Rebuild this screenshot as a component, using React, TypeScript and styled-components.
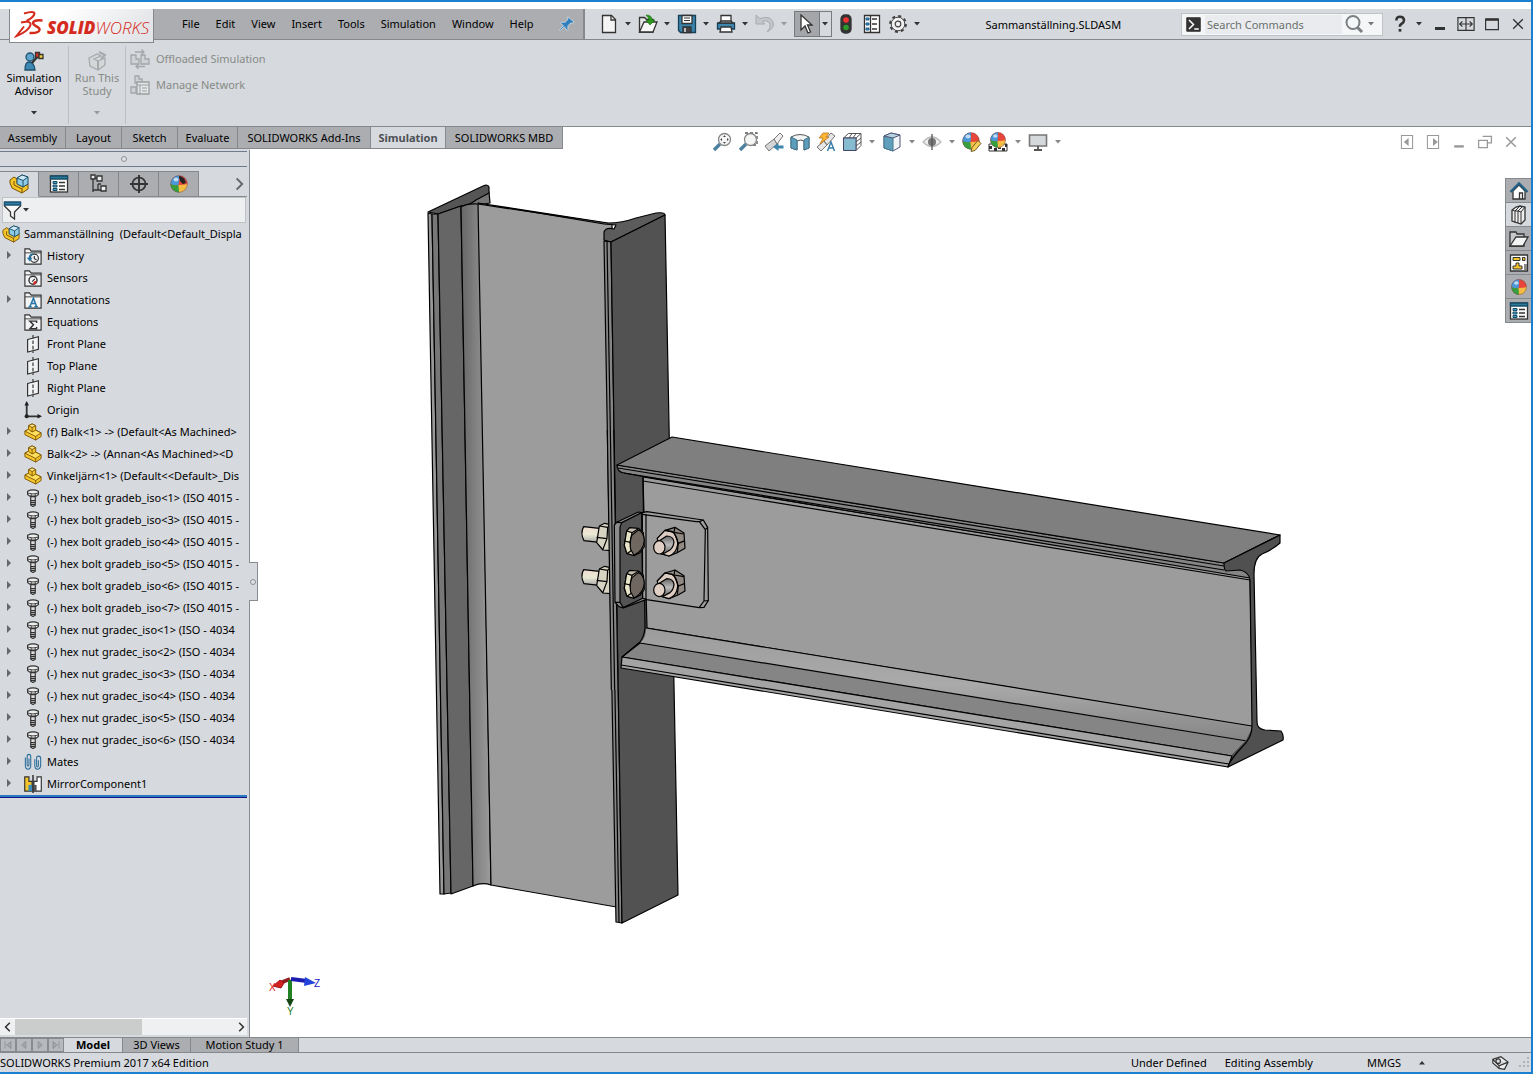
import React from "react";
import styled, { createGlobalStyle, css } from "styled-components";

const c = {
  panel: "#d6d9de",
  bar: "#abadb1",
  line: "#85898c",
  blue: "#1b7fd0",
  text: "#000000",
  muted: "#868b86",
};

const Global = createGlobalStyle`
  *, *::before, *::after { box-sizing: border-box; }
  html, body { margin: 0; padding: 0; }
  body { font-family: "Noto Sans", "Open Sans", "Liberation Sans", sans-serif; font-size: 11px; line-height: 14px; color: ${c.text}; background: ${c.panel}; }
  button, input { font: inherit; color: inherit; }
  button { margin: 0; padding: 0; border: 0; background: none; }
  svg { display: block; flex: none; }
`;

const Shell = styled.div`
  display: flex; flex-direction: column; height: 100vh; min-height: 600px;
  border-right: 2px solid ${c.blue}; background: ${c.panel};
`;
const TopStrip = styled.div`
  height: 9px; flex: none; border-top: 2px solid ${c.blue}; background: #fff;
`;

/* Title bar */
const TitleBar = styled.header`
  position: relative; display: flex; flex: none; height: 31px;
  border-bottom: 1px solid ${c.line}; background: ${c.panel};
`;
const Logo = styled.div`
  position: absolute; left: 9px; top: 0; z-index: 3; width: 145px; height: 34px; padding: 0 4px;
  display: flex; align-items: center; gap: 3px; color: #d52b1e;
  background: linear-gradient(135deg, #fff 30%, #e2e4e7 90%);
  border: 1px solid ${c.line}; border-top: 0;
`;
const LogoText = styled.span`
  font: italic 300 17px/20px "Open Sans", sans-serif; margin-top: 4px;
  b { font-weight: 800; }
`;
const MenuBar = styled.nav`
  display: flex; align-items: center; gap: 16px; padding: 0 9px 0 182px;
  box-shadow: inset -2px 0 ${c.line};
  background: linear-gradient(to right, ${c.panel} 9px, ${c.bar} 9px);
`;
const MenuButton = styled.button` line-height: 30px; `;
const PinButton = styled.button` margin-left: 8px; `;
const QuickTools = styled.div` display: flex; align-items: center; padding-left: 14px; `;
const IconButton = styled.button<{ $w?: number }>`
  display: flex; align-items: center; justify-content: center; width: ${(p) => p.$w ?? 20}px; height: 26px;
`;
const SelectTool = styled.div`
  display: flex; height: 26px; border: 1px solid #777b7e; margin-right: 4px;
  button { height: 24px; }
  button:first-child { background: #a4a6a9; border-right: 1px solid #777b7e; }
`;
const DocTitle = styled.h1`
  flex: 1; margin: 0; text-align: center; font-size: 11px; font-weight: 400; line-height: 31px; white-space: nowrap;
`;
const Search = styled.label`
  display: flex; align-items: center; align-self: center; width: 202px; height: 23px; padding: 0 4px;
  border: 1px solid #c0c3c6; background: #f5f6f7;
  input { flex: 1; min-width: 0; height: 19px; margin: 0 2px 0 4px; padding: 0 2px; border: 0; background: #e9ebee; outline: 0; }
  input::placeholder { color: #6a716d; opacity: 1; }
`;
const WindowTools = styled.div` display: flex; align-items: center; padding-left: 7px; `;

/* Ribbon */
const Ribbon = styled.section` display: flex; flex: none; height: 86px; background: ${c.panel}; `;
const RibbonTool = styled.button<{ $w: number }>`
  display: flex; flex-direction: column; align-items: center; width: ${(p) => p.$w}px; margin: 6px 0 2px;
  padding-top: 5px; border-right: 1px solid #bcbfc3; line-height: 13px;
  svg:last-child { margin-top: 14px; }
  &:disabled { color: ${c.muted}; }
`;
const RibbonList = styled.div` display: flex; flex-direction: column; gap: 6px; padding: 9px 4px; `;
const RibbonLine = styled.button`
  display: flex; align-items: center; gap: 6px; height: 20px; color: ${c.muted};
`;

/* Workspace */
const Workspace = styled.main`
  flex: 1; min-height: 0; display: grid; grid-template: 23px minmax(0, 1fr) / 250px minmax(0, 1fr);
  border-top: 1px solid ${c.line};
`;
const CommandTabs = styled.div`
  grid-area: 1 / 1 / 2 / 3; z-index: 1; justify-self: start; display: flex; height: 22px;
  border-bottom: 1px solid ${c.line}; background: ${c.bar};
`;
const CommandTab = styled.button<{ $active?: boolean; $w: number }>`
  width: ${(p) => p.$w}px; border-right: 1px solid ${c.line}; white-space: nowrap;
  ${(p) => p.$active && css` background: ${c.panel}; font-weight: 700; color: #4c5054; `}
`;
const Panel = styled.aside`
  position: relative; grid-area: 2 / 1; display: flex; flex-direction: column; min-height: 0;
  border-right: 1px solid #888b8f; background: ${c.panel};
`;
const Grip = styled.div`
  height: 16px; margin: 1px 2px 0 0; display: flex; align-items: center; justify-content: center; flex: none;
  border: solid #6f7a8c; border-width: 1px 0;
`;
const Knob = styled.span` width: 6px; height: 6px; border: 1px solid #8d9093; border-radius: 50%; background: #dfe1e4; `;
const PanelTabs = styled.div`
  display: flex; flex: none; height: 26px; margin: 4px 2px 0 0; border-bottom: 1px solid ${c.line};
`;
const PanelTab = styled.button<{ $active?: boolean }>`
  display: flex; align-items: center; justify-content: center; width: ${(p) => (p.$active ? 39 : 40)}px; height: 26px;
  border: solid ${c.line}; border-width: 1px 1px 1px 0; background: ${(p) => (p.$active ? c.panel : c.bar)};
  ${(p) => p.$active && css` border-bottom-color: ${c.panel}; `}
`;
const MoreButton = styled.button` margin-left: auto; `;
const Filter = styled.label`
  display: flex; align-items: center; flex: none; height: 26px; margin: 0 3px 0 2px;
  border: 1px solid #bfc1c4; background: #eeeff1;
  input { flex: 1; min-width: 0; border: 0; background: none; outline: 0; }
`;
const Tree = styled.ul`
  margin: 0 2px 0 0; padding: 0; list-style: none; overflow: hidden; flex: none;
  border-bottom: 2px solid #2b7abf; box-shadow: 0 1px #15158c;
`;
const TreeRow = styled.li<{ $root?: boolean }>`
  display: flex; align-items: center; height: 22px; white-space: pre;
  padding-left: ${(p) => (p.$root ? 2 : 6)}px;
`;
const Expander = styled.button` width: 18px; height: 22px; padding-bottom: 3px; `;
const NodeIcon = styled.span<{ $root?: boolean }>`
  width: 18px; margin-right: ${(p) => (p.$root ? 4 : 5)}px; flex: none;
`;
const PanelHandle = styled.button`
  position: absolute; left: 249px; top: 412px; z-index: 2; width: 9px; height: 39px;
  display: flex; align-items: center; justify-content: center;
  border: 1px solid #888b8f; border-left: 0; background: ${c.panel};
`;
const HScroll = styled.div`
  display: flex; align-items: center; flex: none; height: 17px; margin: auto 2px 2px 0; background: #eff0f2; border-top: 1px solid #fff;
`;
const HThumb = styled.div` width: 127px; height: 16px; margin-right: auto; background: #cbcdcd; `;

/* Graphics area */
const Viewport = styled.section`
  grid-area: 1 / 2 / 3 / 3; display: flex; flex-direction: column; min-height: 0; background: #fff;
`;
const HudRow = styled.div`
  display: grid; grid-template-columns: minmax(0, 1fr) auto minmax(0, 1fr); align-items: center; height: 30px; flex: none;
  padding-right: 7px;
`;
const Hud = styled.div` grid-column: 2; display: flex; `;
const DocControls = styled.div` display: flex; justify-content: flex-end; `;
const Stage = styled.div` display: flex; flex: 1; min-height: 0; `;
const ModelArea = styled.div` flex: 1; min-width: 0; svg { width: 100%; height: 100%; } `;
const TaskPane = styled.div`
  align-self: flex-start; width: 26px; margin-top: 21px; border: solid ${c.line}; border-width: 0 0 1px 1px;
`;
const TaskButton = styled.button<{ $active?: boolean }>`
  display: flex; align-items: center; justify-content: center; width: 100%; height: 24px;
  border-top: 1px solid ${c.line}; background: ${(p) => (p.$active ? c.panel : c.bar)};
`;

/* Bottom */
const BottomTabs = styled.nav`
  display: flex; flex: none; height: 16px; border: solid ${c.line}; border-width: 1px 0;
`;
const NavButton = styled.button`
  width: 16px; height: 14px; border: 1px solid #888b8f; background: #b6b9bd; display: flex; align-items: center; justify-content: center;
`;
const BottomTab = styled.button<{ $active?: boolean; $w: number }>`
  width: ${(p) => p.$w}px; line-height: 12px; border-right: 1px solid ${c.line};
  background: ${(p) => (p.$active ? c.panel : c.bar)}; font-weight: ${(p) => (p.$active ? 700 : 400)};
`;
const StatusBar = styled.footer`
  display: flex; align-items: center; flex: none; height: 21px;
  border-bottom: 2px solid ${c.blue};
`;
const StatusItem = styled.span<{ $gap?: number }>` margin-right: ${(p) => p.$gap ?? 0}px; &:first-child { margin-right: auto; } `;

/* ---------- icons ---------- */
type IconProps = { children: React.ReactNode; s?: number };
const Ico = ({ children, s = 20 }: IconProps) => (
  <svg width={s} height={s} viewBox="0 0 20 20" fill="none" stroke="#333" strokeWidth="1.3" aria-hidden="true">{children}</svg>
);
const Caret = ({ color = "#333" }: { color?: string }) => (
  <svg width="6" height="4" viewBox="0 0 6 4" aria-hidden="true"><path d="M0 0h6L3 3.5z" fill={color} /></svg>
);

const Sphere = () => (
  <g stroke="none">
    <circle cx="10" cy="10" r="8.5" fill="#e8463a" />
    <path d="M10 1.5A8.500 8.500 0 0 0 1.500 10q4 2 8 1 1-5 .5-9.500z" fill="#4a97da" />
    <path d="M1.500 10A8.500 8.500 0 0 0 10 18.500q.5-4-.5-7.500-4 1-8-1z" fill="#36a03c" />
    <path d="M9.500 11q5 0 9-1A8.500 8.500 0 0 1 10 18.500z" fill="#f3bd45" />
    <ellipse cx="7" cy="5.500" rx="2.500" ry="2" fill="#fff" opacity=".65" />
    <circle cx="10" cy="10" r="8.300" fill="none" stroke="#555" strokeWidth=".6" opacity=".7" />
  </g>
);
/* shaded blocks of the part and assembly symbols */
const Part = () => (
  <g stroke="#7b5200" strokeWidth="1" strokeLinejoin="round">
    <path d="M1 9l4-2V3l4-2 4 2v5l6 3v4l-6 4L1 13z" fill="#f5c62c" />
    <path d="M5 3l4 2 4-2-4-2z" fill="#ffe98f" />
    <path d="M5 7l-4 2 12 6 6-4-6-3-4 2z" fill="#ffdf5e" />
    <path d="M9 5v5M13 15v4" fill="none" />
  </g>
);
const Asm = () => (
  <g strokeLinejoin="round" strokeWidth="1">
    <path d="M1 9V6l4-3 3 2v4l6 4 5-3v5l-6 4L3 14z" fill="#f5c62c" stroke="#7b5200" />
    <path d="M13 14v5M5 7v4l8 4" stroke="#7b5200" />
    <path d="M8 4l5-3 6 2v7l-5 3-6-3z" fill="#8dcbe6" stroke="#1d4f69" />
    <path d="M8 4l6 2.500 5-3.500-6-2z" fill="#cfeaf5" stroke="#1d4f69" />
    <path d="M14 6.500V13" stroke="#1d4f69" />
  </g>
);
const PropList = () => (
  <g>
    <rect x="1.500" y="2" width="17" height="16" fill="#fff" />
    <path d="M1.500 2h17v3h-17z" fill="#2b7a9d" stroke="#174d67" />
    <g fill="#4aa3cc" stroke="#174d67" strokeWidth="1"><path d="M4 7.500h4v2H4zM4 11h4v2H4zM4 14.500h4v2H4z" /></g>
    <path d="M10 8.500h6M10 12h6M10 15.500h6" />
  </g>
);
const Folder = ({ children }: { children: React.ReactNode }) => (
  <Ico s={18}><path d="M1 19V2h5l2 2.500h11V19z" fill="#f3f4f5" /><path d="M1 6.500h18" strokeWidth="1" />{children}</Ico>
);
const Plane = () => (
  <Ico s={18}><path d="M4 5l12-3v14L4 19z" fill="#f2f3f4" /><path d="M10 0v20" strokeDasharray="4 2" /></Ico>
);
const Bolt = () => (
  <Ico s={18}>
    <path d="M4 2.500Q10-.5 16 2.500V6l-2.500 2h-7L4 6z" fill="#eee" />
    <path d="M4 4.500q6 2 12 0M8 5.500V8M12.500 5.500V8" strokeWidth="1" />
    <path d="M7.500 8.500h5V18L10 19.500 7.500 18z" fill="#ddd" /><path d="M7.500 13h5M7.500 15h5M7.500 17h5" />
  </Ico>
);
const I: Record<string, React.ReactNode> = {
  history: <Folder><circle cx="11.500" cy="12.500" r="4.500" /><path d="M11.500 10v3l2.500 1.500" /><path d="M3 12l3.500 4 3-4z" fill="#2776a8" stroke="none" /><path d="M6 12.500q0-4 4-4.500" stroke="#2776a8" strokeWidth="2" /></Folder>,
  sensors: <Folder><circle cx="10" cy="12.500" r="4.500" strokeWidth="1.600" /><path d="M9 14l3-3" /><path d="M11 14l3-1-1 4h-3z" fill="#d22" stroke="none" /></Folder>,
  annotations: <Folder><path d="M5 17.500h3.500M11.500 17.500h4M6.500 17.500l4-9.500 3.500 9.500M8.500 14h4" stroke="#2776a8" strokeWidth="1.700" /></Folder>,
  equations: <Folder><path d="M14 11V9H6.500l4 4-4 4.500H14v-2" strokeWidth="1.600" /></Folder>,
  plane: <Plane />,
  origin: <Ico s={18}><path d="M3 2v15h15" strokeWidth="2" /><path d="M3 0L.5 5h5zM20 17l-5-2.500v5z" fill="#222" stroke="none" /><circle cx="3" cy="17" r="2.300" fill="#222" stroke="none" /></Ico>,
  part: <Ico s={18}><Part /></Ico>,
  asm: <Ico s={18}><Asm /></Ico>,
  bolt: <Bolt />,
  mates: <Ico s={18}><g stroke="#2c6f9b" strokeWidth="1.200"><path d="M1.500 5v9q0 4 3 4t3-4V4q0-2.500-2-2.500T3.500 4v9q0 1.500 1 1.500t1-1.500V6M12 7v7q0 4 3 4t3.500-4V6q0-2.500-2.300-2.500T14 6v8q0 1.500 1 1.500t1-1.500V8" /></g></Ico>,
  mirror: <Ico s={18}><path d="M.8 2h4.700v5H9v11H.8z" fill="#f5c62c" /><path d="M19.200 2h-4.700v5H11v11h8.200z" fill="#fff" /><path d="M5 11h4v7H5z" fill="#3b8ab8" stroke="none" /><path d="M11 11h3v7h-3z" fill="#555" stroke="none" /><path d="M10 0v20" strokeWidth="1.700" /></Ico>,
};

const Mag = () => (<><path d="M2 18l6-6" stroke="#4d7f9f" strokeWidth="3.400" /><circle cx="12.500" cy="7.500" r="6" fill="#f5f5f5" stroke="#888" /></>);
const hud: Record<string, React.ReactNode> = {
  "Zoom to Fit": <Ico><Mag /><path d="M12.500 3.200L14 5h-3zM12.500 11.800L14 10h-3zM8.200 7.500L10 6v3zM16.800 7.500L15 6v3z" fill="#444" stroke="none" /></Ico>,
  "Zoom to Area": <Ico><path d="M7 1h12v12h-5" stroke="#555" strokeDasharray="3 2" /><Mag /></Ico>,
  "Previous View": <Ico><path d="M1 14l9-7 3 5-8 7z" fill="#d5d5d5" stroke="#777" strokeWidth="1" /><path d="M10 7l6-6 3 3-6 8z" fill="#eee" stroke="#777" strokeWidth="1" /><path d="M19.500 16.500h-5v2.500L9 15l5.500-4v2.500h5z" fill="#3d86ac" stroke="none" /></Ico>,
  "Section View": <Ico><path d="M1 5q9-5 18 0v11l-5 2V9q-3-2-7 0v9l-6-2z" fill="#f1f3f4" stroke="#555" strokeWidth="1" /><path d="M1 5l6 3v10l-6-2zM14 8l5-3v11l-5 2z" fill="#5b9dbb" stroke="#41748d" strokeWidth="1" /></Ico>,
  "Dynamic Annotation Views": <Ico><path d="M1 15l7-6 3 4-6 6zM8 9l7-8 4 3-8 9z" fill="#e6e6e6" stroke="#777" strokeWidth="1" /><path d="M7 1h6l-3 4h3l-9 7 3-6H3z" fill="#ffb733" stroke="#b77320" strokeWidth=".8" /><path d="M11.500 19l3.500-9 3.500 9M13 16h4" stroke="#3d7fa8" strokeWidth="1.500" /></Ico>,
  "View Orientation": <Ico><path d="M1.500 6l5-4.500H19v12L14 18.500V6z" fill="#fff" stroke="#555" strokeWidth="1" /><path d="M14 6l5-4.500M10 1.500L7 6M14 1.500L11 6M14 10l5-4M14 14l5-4" stroke="#555" strokeWidth="1" /><path d="M1.500 6H14v12.500H1.500z" fill="#86bbd0" stroke="#446" strokeWidth="1" /></Ico>,
  "Display Style": <Ico><path d="M2 4l7-3 9 2v12l-7 4-9-3z" fill="#eef4f7" stroke="#557" strokeWidth="1" /><path d="M2 4l9 2v13l-9-3z" fill="#5f9fbc" stroke="#47768d" strokeWidth="1" /><path d="M2 4l7-3 9 2-7 3z" fill="#b3d3e0" stroke="#557" strokeWidth="1" /></Ico>,
  "Hide/Show Items": <Ico><path d="M1 10q9-10 18 0-9 9-18 0z" fill="#eee" stroke="#bbb" /><circle cx="10" cy="10" r="4" fill="#777" stroke="none" /><path d="M10 2v16" stroke="#555" /></Ico>,
  "Edit Appearance": <Ico><g transform="translate(-1 -1)"><Sphere /></g><path d="M9 19.500l1-4 6-7 3 3-6 7z" fill="#f5ce58" stroke="#665020" strokeWidth=".9" /></Ico>,
  "Apply Scene": <Ico><path d="M1 12h18v7H1z" fill="#fff" strokeWidth="1" /><path d="M1 14h3v3H1zM6 16h3v3H6zM10 14h3v3h-3zM14 16h3v3h-3zM17 12h2v3h-2z" fill="#333" stroke="none" /><g transform="translate(1 -1) scale(.9)"><Sphere /></g></Ico>,
  "View Settings": <Ico><path d="M1.500 3h17v11h-17z" fill="#d6d9dc" stroke="#777" strokeWidth="1.600" /><path d="M10 14v4M6 18h8" stroke="#555" strokeWidth="1.800" /></Ico>,
};
const hudCarets = ["View Orientation", "Display Style", "Hide/Show Items", "Apply Scene", "View Settings"];

/* ---------- 3D model ---------- */
const NutBack = ({ y }: { y: number }) => (
  <g transform={`translate(0 ${y})`}>
    <path d="M41 290L88 295V337L42 332Q30 310 41 290z" fill="url(#steel)" />
    <path d="M88 288L104 280L122 284V362L99 360L80 338z" fill="#d6d3c2" />
    <path d="M88 288L113 292L111 326L98 360M113 292L120 284M80 322L111 326" fill="none" />
  </g>
);
const BoltHead = ({ y }: { y: number }) => (
  <g transform={`translate(0 ${y})`}>
    <path d="M170 303L179 293L205 295L220 308L223 350L210 368L192 377L171 371L163 346z" fill="#c6bdb1" />
    <path d="M170 303L186 308L180 337L186 360L171 371L163 346z" fill="#e7e4c8" />
    <path d="M205 300Q220 304 223 330Q222 360 192 376L182 358Q178 335 186 315z" fill="#706860" />
    <path d="M163 333L181 337M186 308L205 296" fill="none" />
  </g>
);
const NutFront = ({ y }: { y: number }) => (
  <g transform={`translate(0 ${y})`}>
    <path d="M262 325L285 301L315 292L342 309L345 355L324 367L297 378L270 370z" fill="#918983" />
    <path d="M262 325L285 301L305 304Q324 318 323 342Q320 370 297 378L270 370z" fill="#dccbc0" />
    <path d="M268 332L290 318Q310 318 312 336Q310 352 300 360L280 371z" fill="url(#steel2)" />
    <ellipse cx="268" cy="352" rx="17" ry="20" fill="#dfcfc4" />
    <path d="M285 301L312 307L342 312M312 307L325 340L345 332M325 340L322 366M315 292L312 307" fill="none" />
  </g>
);
const Model = () => (
  <svg viewBox="250 157 1255 880" preserveAspectRatio="xMinYMin meet" role="img" aria-label="Bolted beam assembly"
    stroke="#000" strokeWidth="1.200" strokeLinejoin="round">
    <defs>
      <linearGradient id="fillet"><stop offset="0" stopColor="#676767" /><stop offset="1" stopColor="#9c9c9c" /></linearGradient>
      <linearGradient id="low" x2="0" y2="1"><stop offset="0" stopColor="#9c9c9c" /><stop offset=".5" stopColor="#aaa" /><stop offset="1" stopColor="#858585" /></linearGradient>
      <linearGradient id="steel" x2="0" y2="1"><stop offset="0" stopColor="#f1ddd0" /><stop offset=".5" stopColor="#e9e9d4" /><stop offset="1" stopColor="#aaa" /></linearGradient>
      <linearGradient id="steel2" x2="0" y2="1"><stop offset="0" stopColor="#666" /><stop offset=".5" stopColor="#bbb" /><stop offset="1" stopColor="#666" /></linearGradient>
    </defs>
    {/* column */}
    <path d="M476 193L489 192L490 203L478 205L466 206z" fill="#777" />
    <path d="M428 212L483 186Q488 184 489 187V193L476 200Q470 205 461 206L438 214z" fill="#555" />
    <path d="M428 213L432 214L444 894H440z" fill="#999" />
    <path d="M432 214H438L451 893L444 894z" fill="#777" />
    <path d="M438 214L461 206L473 886L451 894z" fill="#666" />
    <path d="M461 207Q467 203 479 204L491 885Q482 882 473 886z" fill="url(#fillet)" />
    <path d="M478 204L612 224L622 908L491 885z" fill="#9c9c9c" />
    <path d="M478 203L608 223Q622 223 636 218L656 213Q665 212 665 215L611 242L604 240V232Q606 227 614 229L616 225L604 224z" fill="#5c5c5c" />
    <path d="M604 241L611 242L622 923L616 922z" fill="#858585" /><path d="M607 241L619 922" />
    <path d="M611 242L665 215L678 895L622 923z" fill="#525252" />
    {/* beam */}
    <path d="M643 477L1250 577L1253 727L647 628z" fill="#9c9c9c" />
    <path d="M617 465L1224 563L1250 570V578L640 476L624 473Q617 472 617 465z" fill="#858585" />
    <path d="M618 468L1224 566M624 473L1224 570M643 481L1250 580" fill="none" />
    <path d="M617 465L672 437L1280 535L1224 563z" fill="#7f7f7f" />
    <path d="M646 628L1252 726Q1252 736 1247 741L640 643Q646 638 646 628z" fill="url(#low)" stroke="none" />
    <path d="M646 628L1252 726" fill="none" />
    <path d="M640 643L1247 741L1232 756L622 657z" fill="#858585" />
    <path d="M1230 757L1246 740L1253 726V745L1232 764z" fill="#505050" stroke="none" />
    <path d="M622 657L1232 756L1228 767L621 668z" fill="#a4a4a4" /><path d="M621 665L1229 764" />
    <path d="M643 478L645 628Q644 637 640 642L622 657" fill="none" />
    <path d="M1224 563L1280 535V543Q1272 550 1262 554Q1254 558 1254 574L1257 722Q1257 729 1265 730L1281 731Q1284 735 1283 740L1228 767Q1230 760 1242 747Q1252 738 1252 726L1250 580Q1249 572 1240 570L1226 571Q1224 570 1224 563z" fill="#505050" />
    {/* bracket and fasteners */}
    <g transform="translate(570 430) scale(.3333)" strokeWidth="3.600">
      <NutBack y={0} /><NutBack y={129} />
      <path d="M112 0H131L145 780H124z" fill="#858585" stroke="none" /><path d="M112 0L124 780M121 0L134 780M131 0L144 780" />
      <path d="M133 285L140 277L205 246L230 250V508L160 534L147 530L135 517z" fill="#8c8c8c" />
      <path d="M155 278L215 248L218 505L160 533L150 517V292z" fill="#545454" />
      <path d="M140 277L155 278M135 517L150 517" fill="none" />
      <path d="M217 248L231 245L379 267L400 270L413 292L415 512L402 532L388 533L230 509L218 504z" fill="#9d9d9d" />
      <path d="M217 253L378 275H388L406 299L402 513L388 532M388 275L400 270M406 299L413 292M402 513L415 512M228 252V508" fill="none" />
      <BoltHead y={0} /><BoltHead y={128} /><NutFront y={0} /><NutFront y={128} />
    </g>
    {/* orientation triad */}
    <g strokeWidth="3" fill="none">
      <path d="M290 979L280 983" stroke="#8f1f1f" strokeWidth="4" /><path d="M273 986L280 980L284 983L281 988z" fill="#d42020" stroke="#a01515" strokeWidth="1" />
      <path d="M290 980V999" stroke="#218021" strokeWidth="4" /><path d="M286 999H294L290 1007z" fill="#144714" stroke="none" />
      <path d="M291 979L307 981" stroke="#1c1cb0" strokeWidth="4" /><path d="M305 977L316 983L304 986z" fill="#2443d8" stroke="none" />
    </g>
    <g stroke="none" fontSize="10" fontFamily="Liberation Sans, sans-serif">
      <text x="269" y="991" fill="#e02020">X</text><text x="287" y="1015" fill="#218021">Y</text><text x="314" y="987" fill="#2020d0">Z</text>
    </g>
  </svg>
);

/* ---------- data ---------- */
const nodes: [string, string, boolean][] = [
  ["history", "History", true], ["sensors", "Sensors", false], ["annotations", "Annotations", true], ["equations", "Equations", false],
  ["plane", "Front Plane", false], ["plane", "Top Plane", false], ["plane", "Right Plane", false], ["origin", "Origin", false],
  ["part", "(f) Balk<1> -> (Default<As Machined>", true], ["part", "Balk<2> -> (Annan<As Machined><D", true],
  ["part", "Vinkeljärn<1> (Default<<Default>_Dis", true],
  ...[1, 3, 4, 5, 6, 7].map((n): [string, string, boolean] => ["bolt", `(-) hex bolt gradeb_iso<${n}> (ISO 4015 -`, true]),
  ...[1, 2, 3, 4, 5, 6].map((n): [string, string, boolean] => ["bolt", `(-) hex nut gradec_iso<${n}> (ISO - 4034`, true]),
  ["mates", "Mates", true], ["mirror", "MirrorComponent1", true],
];
const tabs: [string, number][] = [["Assembly", 66], ["Layout", 56], ["Sketch", 56], ["Evaluate", 60], ["SOLIDWORKS Add-Ins", 133], ["Simulation", 75], ["SOLIDWORKS MBD", 117]];

const quick: [string, React.ReactNode, string?][] = [
  ["New", <Ico><path d="M3.500 1.500h9l4 4v13h-13z" fill="#f4f4f4" /><path d="M12 1.500V6h4.500" /></Ico>],
  ["Open", <Ico><path d="M1.500 18V3.500h5l2 2H15V18z" fill="#e5e6e7" /><path d="M1.500 18L6 8h13l-4 10z" fill="#f7f7f7" /><path d="M8 1q6 0 6 5h3l-5 5-4-5h3q0-2-3-5z" fill="#2b9a1b" stroke="#1a6b10" strokeWidth=".6" /></Ico>],
  ["Save", <Ico><path d="M1.500 1.500h17v17h-15l-2-2z" fill="#3a83ab" stroke="#173f58" /><path d="M5 1.500h10v8H5z" fill="#fff" /><path d="M7 4h6M7 6.500h6" strokeWidth="1" /><path d="M6 13h8v5.500H6z" fill="#444" /><path d="M8 14v4" stroke="#fff" /></Ico>],
  ["Print", <Ico><path d="M5 1.500h10V9H5z" fill="#fff" /><path d="M1.500 9h17v6h-17z" fill="#3f87ae" stroke="#173f58" /><path d="M3 9h14l-2-2H5z" fill="#ccc" /><path d="M5 13h10l1 5H4z" fill="#fff" /></Ico>],
  ["Undo", <Ico><path d="M1 1v9h9L7 7.500q6-2 8 2.500 1 4-3 8 8-4 6-10-3-7-13-3.500z" fill="#c4c7ca" stroke="#a9acaf" strokeWidth="1" /></Ico>, "#999"],
];
const Gear = () => (
  <Ico>
    <circle cx="10" cy="10" r="7.800" stroke="#444" strokeWidth="2.200" strokeDasharray="3.060 3.060" />
    <circle cx="10" cy="10" r="6.800" fill="#f1f1f1" stroke="#444" strokeWidth="1" />
    <circle cx="10" cy="10" r="2.800" stroke="#444" strokeWidth="1.200" />
  </Ico>
);

export default function App() {
  return (
    <Shell>
      <Global />
      <TopStrip />
      <TitleBar>
        <Logo>
          <svg width="30" height="30" viewBox="0 0 30 30" fill="none" stroke="#d52b1e" strokeWidth="2" aria-hidden="true">
            <path d="M10 2.500Q20-.5 20.500 2.500Q20 6 12.500 10" />
            <path d="M7 11.500Q17 9 16.500 14Q15 20 2.500 25L10 15.500" />
            <path d="M28.500 9.500Q19.500 8.500 19 12C19 15 26.500 16 25.500 19Q24.500 22.500 15.500 22" strokeWidth="2.500" />
          </svg>
          <LogoText><b>SOLID</b>WORKS</LogoText>
        </Logo>
        <MenuBar>
          {["File", "Edit", "View", "Insert", "Tools", "Simulation", "Window", "Help"].map((m) => <MenuButton key={m}>{m}</MenuButton>)}
          <PinButton aria-label="Pin menu"><Ico s={18}><path d="M11 2l7 6-2 1-2 0-3 3v4l-1 1-3-4-4 4-1 0 0-1 4-4-3-3 1-1h4l3-3z" fill="#2d80bd" stroke="#dfe8ef" strokeWidth=".8" /></Ico></PinButton>
        </MenuBar>
        <QuickTools>
          {quick.map(([name, icon, col]) => (
            <React.Fragment key={name}>
              <IconButton aria-label={name}>{icon}</IconButton>
              <IconButton $w={19} aria-label={`${name} options`}><Caret color={col} /></IconButton>
            </React.Fragment>
          ))}
          <SelectTool>
            <IconButton $w={25} aria-label="Select"><Ico><path d="M4 1v15l4-4 3 7 2.500-1-3-7H15z" fill="#fff" /></Ico></IconButton>
            <IconButton $w={11} aria-label="Select options"><Caret /></IconButton>
          </SelectTool>
          <IconButton aria-label="Rebuild"><Ico><rect x="5" y="1" width="10" height="18" rx="4" fill="#333" /><circle cx="10" cy="6" r="2.800" fill="#e33" stroke="none" /><circle cx="10" cy="13.500" r="2.800" fill="#2b9a2b" stroke="none" /></Ico></IconButton>
          <IconButton $w={32} aria-label="File properties"><Ico><path d="M2.500 1.500h15v17h-15z" fill="#fff" /><path d="M8.500 1.500v17" /><path d="M4 4h3v2H4zM4 9h3v2H4zM4 14h3v2H4z" fill="#3a86b8" stroke="#22638f" strokeWidth="1" /><path d="M10 5h5M10 10h5M10 15h5" /></Ico></IconButton>
          <IconButton aria-label="Options"><Gear /></IconButton>
          <IconButton $w={18} aria-label="Options list"><Caret /></IconButton>
        </QuickTools>
        <DocTitle>Sammanställning.SLDASM</DocTitle>
        <Search>
          <Ico s={15}><path d="M1 1h18v18H1z" fill="#333" /><path d="M4 4l6 6-6 6M11 16h6" stroke="#fff" strokeWidth="2" /></Ico>
          <input aria-label="Search Commands" placeholder="Search Commands" />
          <Ico><circle cx="9" cy="8.500" r="6.500" stroke="#7b7f82" strokeWidth="2" /><path d="M13 13l5 5" stroke="#7b7f82" strokeWidth="3" /></Ico>
          <IconButton $w={14} aria-label="Search options"><Caret color="#777" /></IconButton>
        </Search>
        <WindowTools>
          <IconButton aria-label="Help"><Ico s={18}><path d="M6 6q0-4 4-4t4.500 3.500Q14.500 8 12 9.500T10 13" strokeWidth="2.800" /><path d="M10 15.500v3" strokeWidth="3" /></Ico></IconButton>
          <IconButton $w={17} aria-label="Help options"><Caret /></IconButton>
          <IconButton $w={26} aria-label="Minimize"><Ico><path d="M5 14.500h10" strokeWidth="3" /></Ico></IconButton>
          <IconButton $w={26} aria-label="Span displays"><Ico s={18}><path d="M1 3h18v14H1zM10 3v14M3 10h14M6 7l-3 3 3 3M14 7l3 3-3 3" /></Ico></IconButton>
          <IconButton $w={26} aria-label="Maximize"><Ico s={16}><path d="M2 4h16v13H2z" strokeWidth="1.500" /><path d="M2 4.500h16" strokeWidth="3" /></Ico></IconButton>
          <IconButton $w={26} aria-label="Close"><Ico s={16}><path d="M4 4l12 12M16 4L4 16" strokeWidth="1.700" /></Ico></IconButton>
        </WindowTools>
      </TitleBar>

      <Ribbon>
        <RibbonTool $w={69}>
          <Ico><circle cx="6" cy="6" r="4" fill="#5ea4cc" stroke="#1f516f" /><path d="M1 19q0-8 4-8 5 0 6 8z" fill="#3e88b4" stroke="#1f516f" /><path d="M8 12l7-8" strokeWidth="2" /><path d="M11.500 1.500h4v5h-4z" fill="#d93025" /><path d="M15 3.500h4v4h-4z" fill="#f4d03f" /></Ico>
          <span>Simulation<br />Advisor</span><Caret />
        </RibbonTool>
        <RibbonTool $w={57} disabled>
          <Ico><path d="M2 7l8-4 4 2-7 3 4 2 7-3v7l-7 5-8-4z" fill="#d4d6d8" stroke="#a7aaac" /><path d="M11 10v9M12 1l6 3-4 4" stroke="#a7aaac" strokeWidth="2" /></Ico>
          <span>Run This<br />Study</span><Caret color="#999" />
        </RibbonTool>
        <RibbonList>
          <RibbonLine disabled><Ico><path d="M1 6h5v4h3v5H1zM11 6h4v4h4v5h-8z" fill="#cfd1d4" stroke="#a4a7a9" /><path d="M5 3h9M11.500.5L14 3l-2.500 2.500M15 17.500H6M8.500 15L6 17.500 8.500 20" stroke="#a4a7a9" /></Ico>Offloaded Simulation</RibbonLine>
          <RibbonLine disabled><Ico><path d="M5 1h4v3h3v4H5zM1 12h5v6H1z" fill="#cfd1d4" stroke="#a4a7a9" /><path d="M7 7h12v12H7z" fill="#e4e5e7" stroke="#9b9ea0" /><path d="M7 10h12M10 10v9M12 13h5M12 16h5" stroke="#9b9ea0" strokeWidth="1" /></Ico>Manage Network</RibbonLine>
        </RibbonList>
      </Ribbon>

      <Workspace>
        <CommandTabs>
          {tabs.map(([t, w]) => <CommandTab key={t} $w={w} $active={t === "Simulation"}>{t}</CommandTab>)}
        </CommandTabs>
        <Panel>
          <Grip><Knob /></Grip>
          <PanelTabs>
            <PanelTab $active aria-label="FeatureManager"><Ico><Asm /></Ico></PanelTab>
            <PanelTab aria-label="PropertyManager"><Ico><PropList /></Ico></PanelTab>
            <PanelTab aria-label="ConfigurationManager"><Ico><path d="M4 2v16M4 4h5M4 16h9M9 10v6M9 10h3" /><path d="M2 1h4v4H2zM8 2h5v5H8zM12 12h5v5h-5z" fill="#eee" /></Ico></PanelTab>
            <PanelTab aria-label="DimXpertManager"><Ico><circle cx="10" cy="10" r="6.500" strokeWidth="1.700" /><path d="M10 1v18M1 10h18" strokeWidth="1.900" /></Ico></PanelTab>
            <PanelTab aria-label="DisplayManager"><Ico><Sphere /><path d="M10 2q6 1 7 7l-3 1q-4-3-4-8z" fill="#222" stroke="none" /></Ico></PanelTab>
            <MoreButton aria-label="More tabs"><Ico s={16}><path d="M7 3l7 7-7 7" stroke="#666" strokeWidth="2.400" /></Ico></MoreButton>
          </PanelTabs>
          <Filter>
            <Ico><path d="M1.500 3h16v3l-6 6v7l-4-3v-4l-6-6z" fill="#f8f8f8" /><path d="M1.500 2h16v3h-16z" fill="#2f7ea8" stroke="#1d5271" /></Ico>
            <Caret />
            <input aria-label="Filter tree" />
          </Filter>
          <Tree>
            <TreeRow $root><NodeIcon $root>{I.asm}</NodeIcon>{"Sammanställning  (Default<Default_Displa"}</TreeRow>
            {nodes.map(([icon, label, open], i) => (
              <TreeRow key={i}>
                <Expander aria-label={`Expand ${label}`} disabled={!open}>
                  {open && <svg width="5" height="8" viewBox="0 0 5 8" aria-hidden="true"><path d="M1 0v8l4-4z" fill="#666" /></svg>}
                </Expander>
                <NodeIcon>{I[icon]}</NodeIcon>{label}
              </TreeRow>
            ))}
          </Tree>
          <HScroll>
            <IconButton $w={15} aria-label="Scroll left"><Ico s={12}><path d="M13 3l-7 7 7 7" strokeWidth="2.600" /></Ico></IconButton>
            <HThumb />
            <IconButton $w={12} aria-label="Scroll right"><Ico s={12}><path d="M7 3l7 7-7 7" strokeWidth="2.600" /></Ico></IconButton>
          </HScroll>
          <PanelHandle aria-label="Collapse panel"><Knob /></PanelHandle>
        </Panel>
        <Viewport>
          <HudRow>
            <Hud>
              {Object.entries(hud).map(([name, icon]) => (
                <React.Fragment key={name}>
                  <IconButton $w={26} aria-label={name}>{icon}</IconButton>
                  {hudCarets.includes(name) && <IconButton $w={14} aria-label={`${name} options`}><Caret color="#888" /></IconButton>}
                </React.Fragment>
              ))}
            </Hud>
            <DocControls>
              <IconButton $w={26} aria-label="Previous pane"><Ico s={16}><path d="M3 2h14v16H3z" stroke="#999" /><path d="M12 5v10l-6-5z" fill="#999" stroke="none" /></Ico></IconButton>
              <IconButton $w={26} aria-label="Next pane"><Ico s={16}><path d="M3 2h14v16H3z" stroke="#999" /><path d="M10 5v10l6-5z" fill="#999" stroke="none" /></Ico></IconButton>
              <IconButton $w={26} aria-label="Minimize document"><Ico s={16}><path d="M4 15.500h12" stroke="#999" strokeWidth="3" /></Ico></IconButton>
              <IconButton $w={26} aria-label="Restore document"><Ico s={16}><path d="M7 3h11v8h-5M2 8h11v9H2z" stroke="#999" strokeWidth="1.600" /></Ico></IconButton>
              <IconButton $w={26} aria-label="Close document"><Ico s={16}><path d="M4 4l12 12M16 4L4 16" stroke="#999" strokeWidth="1.900" /></Ico></IconButton>
            </DocControls>
          </HudRow>
          <Stage>
            <ModelArea><Model /></ModelArea>
            <TaskPane>
              <TaskButton aria-label="Resources"><Ico><path d="M4 10v8h12v-8l-6-6z" fill="#fff" /><path d="M10.500 18v-6h3v6" /><path d="M1.500 11L10 2.500l8.500 8.500" stroke="#235f83" strokeWidth="2.400" /></Ico></TaskButton>
              <TaskButton $active aria-label="Design Library"><Ico><path d="M3 5l4-3v0l4-1 5 1v13l-4 4-9-3z" fill="#eee" /><path d="M3 5l3 1v12M6 6l4-4M6 6h3v12M9 6l4-4M9 6l3 1v12M12 7l4-5" strokeWidth="1" /></Ico></TaskButton>
              <TaskButton aria-label="File Explorer"><Ico><path d="M1 17V3h6l1 2h7v12z" fill="#c6c8ca" /><path d="M1 17L7 8h12l-5 9z" fill="#f4f4f4" /></Ico></TaskButton>
              <TaskButton aria-label="View Palette"><Ico><path d="M1.500 2h17v16h-17z" fill="#fff" /><path d="M4 4.500h7v3H4zM13.500 4.500H16v3h-2.500zM7 10h3v3h3v3H4v-3h3z" fill="#f5c62c" strokeWidth="1" /><path d="M15 11h3v6h-3z" fill="#888" stroke="none" /></Ico></TaskButton>
              <TaskButton aria-label="Appearances"><Ico s={18}><Sphere /></Ico></TaskButton>
              <TaskButton aria-label="Custom Properties"><Ico><PropList /></Ico></TaskButton>
            </TaskPane>
          </Stage>
        </Viewport>
      </Workspace>

      <BottomTabs>
        {["M5 4v12M15 4l-7 6 7 6z", "M13 4l-7 6 7 6z", "M7 4l7 6-7 6z", "M15 4v12M5 4l7 6-7 6z"].map((d, i) => (
          <NavButton key={d} aria-label={["First tab", "Previous tab", "Next tab", "Last tab"][i]}><Ico s={12}><path d={d} fill="#a4a7aa" stroke="#8c8f92" /></Ico></NavButton>
        ))}
        <BottomTab $active $w={59}>Model</BottomTab>
        <BottomTab $w={68}>3D Views</BottomTab>
        <BottomTab $w={108}>Motion Study 1</BottomTab>
      </BottomTabs>
      <StatusBar>
        <StatusItem>SOLIDWORKS Premium 2017 x64 Edition</StatusItem>
        <StatusItem $gap={18}>Under Defined</StatusItem>
        <StatusItem $gap={54}>Editing Assembly</StatusItem>
        <StatusItem $gap={18}>MMGS</StatusItem>
        <StatusItem $gap={66}><svg width="6" height="4" viewBox="0 0 6 4" aria-hidden="true"><path d="M0 3.500h6L3 0z" fill="#333" /></svg></StatusItem>
        <StatusItem $gap={10}><Ico s={18}><path d="M2 6l9-3 8 6-4 8-6-1-7-6zM2 6l7 7 10-4M9 13v3" fill="#eee" /><circle cx="8" cy="8" r="2.500" /></Ico></StatusItem>
        <svg width="12" height="12" viewBox="0 0 12 12" fill="#b0b3b6" aria-hidden="true"><path d="M8 0h2v2H8zM8 4h2v2H8zM8 8h2v2H8zM4 4h2v2H4zM4 8h2v2H4zM0 8h2v2H0z" /></svg>
      </StatusBar>
    </Shell>
  );
}
